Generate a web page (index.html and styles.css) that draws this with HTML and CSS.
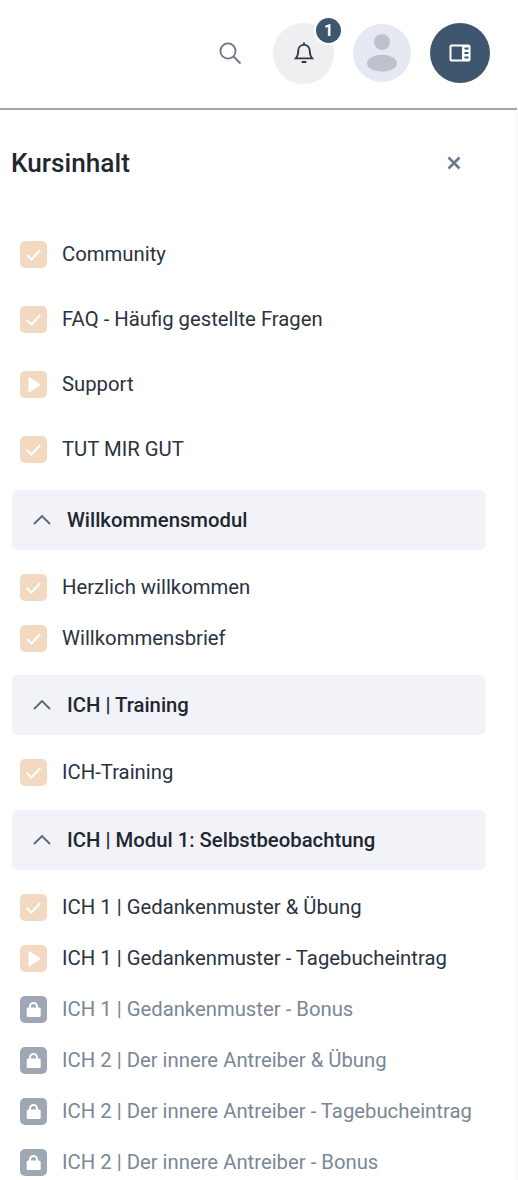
FILE: index.html
```html
<!DOCTYPE html>
<html lang="de">
<head>
<meta charset="utf-8">
<title>Kursinhalt</title>
<link rel="stylesheet" href="styles.css">
</head>
<body>
<header class="topbar">
  <svg class="search" viewBox="0 0 24 24" width="24" height="24"><circle cx="10" cy="10" r="7.600"/><path d="M15.500 15.500 22.500 22.500"/></svg>
  <div class="bell">
    <svg viewBox="0 0 24 24" width="26" height="26"><path d="M12 4.500c-3.200 0-5.300 2.400-5.300 5.500 0 4-1 5.600-2.300 7h15.200c-1.300-1.400-2.300-3-2.300-7 0-3.100-2.100-5.500-5.300-5.500Z"/><path d="M12 2.200v2.300M9.800 20.300h4.400"/></svg>
    <span class="badge">1</span>
  </div>
  <div class="avatar">
    <svg viewBox="0 0 58 58" width="58" height="58"><circle cx="29" cy="18" r="8"/><ellipse cx="29" cy="39.300" rx="15" ry="8.500"/></svg>
  </div>
  <div class="panel-btn">
    <svg viewBox="0 0 22 18" width="22" height="18"><rect class="pb-frame" x="0.500" y="0.500" width="21" height="17" rx="2"/><rect class="pb-pane" x="2.500" y="2.500" width="10.500" height="13"/><rect class="pb-pane" x="15.500" y="3.500" width="4" height="2"/><rect class="pb-pane" x="15.500" y="8" width="4" height="2"/><rect class="pb-pane" x="15.500" y="12.500" width="4" height="2"/></svg>
  </div>
</header>
<main class="content">
  <div class="title-row">
    <h1 class="title">Kursinhalt</h1>
    <svg class="close" viewBox="0 0 14 14" width="14" height="14"><path d="M1.500 1.500l11 11M12.500 1.500l-11 11"/></svg>
  </div>
  <ul class="list list-wide">
    <li class="row"><span class="ico done"><svg viewBox="0 0 27 27"><path d="M6.800 14l4.700 4.500 8.800-9.500"/></svg></span>Community</li>
    <li class="row"><span class="ico done"><svg viewBox="0 0 27 27"><path d="M6.800 14l4.700 4.500 8.800-9.500"/></svg></span>FAQ - Häufig gestellte Fragen</li>
    <li class="row"><span class="ico play"><svg viewBox="0 0 27 27"><path d="M8.500 7v13.500a.8.8 0 0 0 1.200.7l10.200-6.800a.8.8 0 0 0 0-1.300L9.700 6.300A.8.8 0 0 0 8.500 7z"/></svg></span>Support</li>
    <li class="row"><span class="ico done"><svg viewBox="0 0 27 27"><path d="M6.800 14l4.700 4.500 8.800-9.500"/></svg></span>TUT MIR GUT</li>
  </ul>
  <div class="group"><svg viewBox="0 0 20 12" width="20" height="12"><path d="M2 10l8-8 8 8"/></svg>Willkommensmodul</div>
  <ul class="list">
    <li class="row"><span class="ico done"><svg viewBox="0 0 27 27"><path d="M6.800 14l4.700 4.500 8.800-9.500"/></svg></span>Herzlich willkommen</li>
    <li class="row"><span class="ico done"><svg viewBox="0 0 27 27"><path d="M6.800 14l4.700 4.500 8.800-9.500"/></svg></span>Willkommensbrief</li>
  </ul>
  <div class="group"><svg viewBox="0 0 20 12" width="20" height="12"><path d="M2 10l8-8 8 8"/></svg>ICH | Training</div>
  <ul class="list list-tall">
    <li class="row"><span class="ico done"><svg viewBox="0 0 27 27"><path d="M6.800 14l4.700 4.500 8.800-9.500"/></svg></span>ICH-Training</li>
  </ul>
  <div class="group"><svg viewBox="0 0 20 12" width="20" height="12"><path d="M2 10l8-8 8 8"/></svg>ICH | Modul 1: Selbstbeobachtung</div>
  <ul class="list">
    <li class="row"><span class="ico done"><svg viewBox="0 0 27 27"><path d="M6.800 14l4.700 4.500 8.800-9.500"/></svg></span>ICH 1 | Gedankenmuster &amp; Übung</li>
    <li class="row"><span class="ico play"><svg viewBox="0 0 27 27"><path d="M8.500 7v13.500a.8.8 0 0 0 1.200.7l10.200-6.800a.8.8 0 0 0 0-1.300L9.700 6.300A.8.8 0 0 0 8.500 7z"/></svg></span>ICH 1 | Gedankenmuster - Tagebucheintrag</li>
    <li class="row locked"><span class="ico lock"><svg viewBox="0 0 27 27"><path class="shackle" d="M10 12v-1.500a3.500 3.500 0 0 1 7 0V12"/><rect x="6.700" y="11.500" width="14" height="9.500" rx="1.500"/></svg></span>ICH 1 | Gedankenmuster - Bonus</li>
    <li class="row locked"><span class="ico lock"><svg viewBox="0 0 27 27"><path class="shackle" d="M10 12v-1.500a3.500 3.500 0 0 1 7 0V12"/><rect x="6.700" y="11.500" width="14" height="9.500" rx="1.500"/></svg></span>ICH 2 | Der innere Antreiber &amp; Übung</li>
    <li class="row locked"><span class="ico lock"><svg viewBox="0 0 27 27"><path class="shackle" d="M10 12v-1.500a3.500 3.500 0 0 1 7 0V12"/><rect x="6.700" y="11.500" width="14" height="9.500" rx="1.500"/></svg></span>ICH 2 | Der innere Antreiber - Tagebucheintrag</li>
    <li class="row locked"><span class="ico lock"><svg viewBox="0 0 27 27"><path class="shackle" d="M10 12v-1.500a3.500 3.500 0 0 1 7 0V12"/><rect x="6.700" y="11.500" width="14" height="9.500" rx="1.500"/></svg></span>ICH 2 | Der innere Antreiber - Bonus</li>
  </ul>
</main>
</body>
</html>
```
FILE: styles.css
```css
* { box-sizing: border-box; }
html, body { height: 100%; }
body {
  margin: 0;
  background: #fff;
  color: #232b36;
  font-family: Roboto, "Liberation Sans", sans-serif;
  overflow: hidden;
}
.topbar {
  height: 110px;
  width: 517px;
  border-bottom: 2px solid #9aa5b4;
  display: flex;
  align-items: center;
  justify-content: flex-end;
  padding: 0 27px 2px 0;
}
.search { fill: none; stroke: #6c7784; stroke-width: 1.800; margin-right: 31px; }
.bell {
  position: relative;
  width: 61px;
  height: 61px;
  border-radius: 50%;
  background: #efeff1;
  display: flex;
  align-items: center;
  justify-content: center;
  margin-right: 19px;
}
.bell svg { fill: none; stroke: #2f3a48; stroke-width: 1.700; }
.badge {
  position: absolute;
  top: -5px;
  right: -7px;
  width: 25px;
  height: 25px;
  border-radius: 50%;
  background: #3f566f;
  box-shadow: 0 0 0 2px #fff;
  color: #fff;
  font-size: 16px;
  font-weight: 700;
  display: flex;
  align-items: center;
  justify-content: center;
}
.avatar {
  width: 58px;
  height: 58px;
  border-radius: 50%;
  background: #e6e9f1;
  margin-right: 19px;
}
.avatar svg { display: block; fill: #bcc3ce; }
.panel-btn {
  width: 60px;
  height: 60px;
  border-radius: 50%;
  background: #3f566f;
  display: flex;
  align-items: center;
  justify-content: center;
}
.pb-frame { fill: #fff; }
.pb-pane { fill: #3f566f; }
.content {
  padding: 0 0 0 12px;
  border-right: 2px solid #f8f9fb;
  height: 1070px;
}
.title-row {
  width: 473px;
  height: 98px;
  padding-top: 8px;
  display: flex;
  align-items: center;
  justify-content: space-between;
}
.title { margin: 0 0 0 -1px; font-size: 26.200px; font-weight: 500; color: #1f2730; }
.close { fill: none; stroke: #66788c; stroke-width: 2.500; margin-right: 24px; }
.list { list-style: none; margin: 0; padding: 11.500px 0; }
.list-tall { padding: 11.500px 0 12.500px; }
.list-wide { padding: 13.500px 0 8.500px; }
.list-wide .row { height: 65px; }
.row {
  height: 51px;
  display: flex;
  align-items: center;
  padding-left: 8px;
  font-size: 20.300px;
  color: #2a3340;
}
.locked { color: #7a8795; }
.ico {
  width: 27px;
  height: 27px;
  border-radius: 5px;
  margin-right: 15px;
  flex: none;
}
.ico svg { display: block; width: 27px; height: 27px; }
.done, .play { background: #f3d9c2; }
.done svg { fill: none; stroke: #fff; stroke-width: 2; }
.play svg { fill: #fff; }
.lock { background: #9ea8b4; }
.lock svg { fill: #fff; }
.lock .shackle { fill: none; stroke: #fff; stroke-width: 2; }
.group {
  width: 473px;
  height: 60px;
  border-radius: 5px;
  background: #f1f3f9;
  display: flex;
  align-items: center;
  padding-left: 20px;
  font-size: 20.300px;
  font-weight: 500;
  color: #1f2730;
}
.group svg { fill: none; stroke: #5c6672; stroke-width: 1.800; margin-right: 15px; }
```
